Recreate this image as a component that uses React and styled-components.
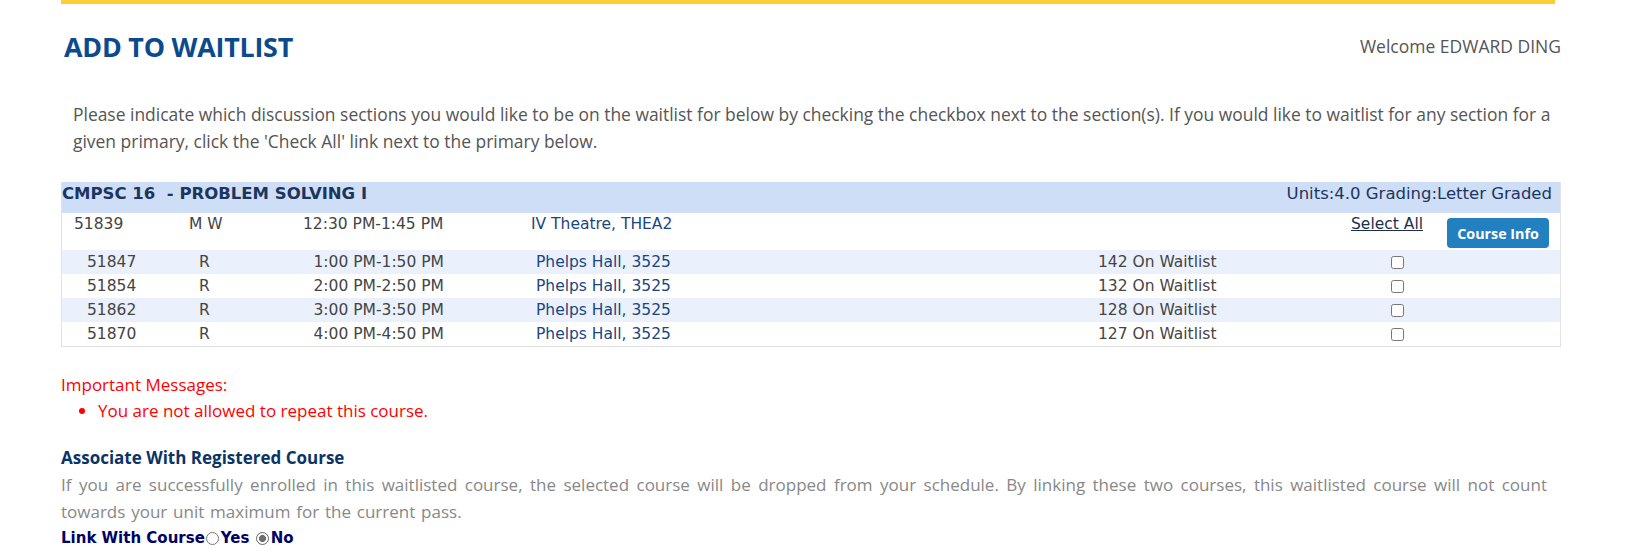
import React from "react";
import styled, { createGlobalStyle } from "styled-components";

const GlobalStyle = createGlobalStyle`
  body {
    margin: 0;
    background: #fff;
    font-family: "Open Sans", "Noto Sans", sans-serif;
  }
`;

const sections = [
  { id: "51847", days: "R", time: "1:00 PM-1:50 PM", room: "Phelps Hall, 3525", wait: 142 },
  { id: "51854", days: "R", time: "2:00 PM-2:50 PM", room: "Phelps Hall, 3525", wait: 132 },
  { id: "51862", days: "R", time: "3:00 PM-3:50 PM", room: "Phelps Hall, 3525", wait: 128 },
  { id: "51870", days: "R", time: "4:00 PM-4:50 PM", room: "Phelps Hall, 3525", wait: 127 },
];

function App() {
  return (
    <Page>
      <GlobalStyle />
      <GoldBar />
      <TitleRow>
        <Title>ADD TO WAITLIST</Title>
        <Welcome>Welcome EDWARD DING</Welcome>
      </TitleRow>

      <Intro>
        Please indicate which discussion sections you would like to be on the waitlist for below by
        checking the checkbox next to the section(s). If you would like to waitlist for any section for a
        given primary, click the 'Check All' link next to the primary below.
      </Intro>

      <CourseTable>
        <CourseHead>
          <CourseName>CMPSC 16&nbsp; - PROBLEM SOLVING I</CourseName>
          <CourseMeta>Units:4.0 Grading:Letter Graded</CourseMeta>
        </CourseHead>
        <PrimaryRow>
          <Cell>51839</Cell>
          <Cell>M W</Cell>
          <Cell>12:30 PM-1:45 PM</Cell>
          <Room>IV Theatre, THEA2</Room>
          <SelectAll href="#">Select All</SelectAll>
          <InfoButton>Course Info</InfoButton>
        </PrimaryRow>
        {sections.map((s, i) => (
          <SectionRow key={s.id} $alt={i % 2 === 0}>
            <Cell>{s.id}</Cell>
            <Cell>{s.days}</Cell>
            <TimeCell>{s.time}</TimeCell>
            <Room>{s.room}</Room>
            <Cell>{s.wait} On Waitlist</Cell>
            <CheckCell>
              <Check type="checkbox" />
            </CheckCell>
          </SectionRow>
        ))}
      </CourseTable>

      <Messages>
        <MessageTitle>Important Messages:</MessageTitle>
        <MessageList>
          <li>You are not allowed to repeat this course.</li>
        </MessageList>
      </Messages>

      <Associate>
        <AssociateTitle>Associate With Registered Course</AssociateTitle>
        <AssociateText>
          If you are successfully enrolled in this waitlisted course, the selected course will be dropped
          from your schedule. By linking these two courses, this waitlisted course will not count towards
          your unit maximum for the current pass.
        </AssociateText>
        <LinkLine>
          Link With Course
          <Radio type="radio" name="link" />
          Yes&nbsp;
          <Radio type="radio" name="link" defaultChecked />
          No
        </LinkLine>
      </Associate>
    </Page>
  );
}

export default App;

const Page = styled.div`
  width: 1500px;
  padding-left: 61px;
`;

const GoldBar = styled.div`
  width: 1494px;
  height: 4px;
  background: #fecd38;
`;

const TitleRow = styled.div`
  display: flex;
  justify-content: space-between;
  align-items: center;
  margin-top: 27px;
  height: 30px;
`;

const Title = styled.h1`
  margin: 0 0 0 3px;
  font-size: 26.8px;
  font-weight: 700;
  color: #0b4a8c;
  letter-spacing: -0.2px;
`;

const Welcome = styled.div`
  font-size: 17.5px;
  color: #555;
`;

const Intro = styled.p`
  margin: 40px 0 0 0;
  padding-left: 12px;
  font-size: 17.45px;
  line-height: 27px;
  color: #555;
`;

const CourseTable = styled.div`
  margin-top: 27px;
  border: 1px solid #e2e2e2;
  border-top: none;
  font-family: "DejaVu Sans", sans-serif;
  font-size: 15.5px;
  color: #444;
`;

const CourseHead = styled.div`
  display: flex;
  justify-content: space-between;
  align-items: flex-start;
  height: 31px;
  padding: 2px 8px 0 0;
  box-sizing: border-box;
  background: #cfdef7;
  color: #1b355f;
  font-size: 16.5px;
`;

const CourseName = styled.div`
  font-weight: 700;
`;

const CourseMeta = styled.div``;

const PrimaryRow = styled.div`
  display: grid;
  grid-template-columns: 115px 114px 228px 1fr auto 102px;
  align-items: start;
  height: 37px;
  padding: 2px 11px 0 12px;
  box-sizing: border-box;
`;

const Cell = styled.div`
  white-space: nowrap;
`;

const TimeCell = styled.div`
  white-space: nowrap;
  text-align: right;
`;

const Room = styled.div`
  color: #1a4680;
  white-space: nowrap;
`;

const SectionRow = styled.div`
  display: grid;
  grid-template-columns: 112px 90px 155px 92px 562px 240px 118px;
  align-items: center;
  height: 24px;
  padding-left: 25px;
  background: ${(p) => (p.$alt ? "#eaf1fd" : "#fff")};

  & > ${Room} {
    grid-column: 5;
  }
`;

const SelectAll = styled.a`
  color: #1c2f4a;
  text-decoration: underline;
  margin-right: 24px;
`;

const InfoButton = styled.button`
  margin-top: 3px;
  height: 30px;
  border: none;
  border-radius: 4px;
  background: #2380c0;
  color: #fff;
  font-family: "Open Sans", sans-serif;
  font-weight: 700;
  font-size: 14.3px;
  padding: 0;
`;

const CheckCell = styled.div`
  display: flex;
  justify-content: center;
`;

const Check = styled.input`
  margin: 0;
  width: 13px;
  height: 13px;
`;

const Messages = styled.div`
  margin-top: 26px;
  color: #ff0000;
  font-size: 17px;
`;

const MessageTitle = styled.div`
  line-height: 24px;
`;

const MessageList = styled.ul`
  margin: 0;
  padding-left: 37px;
  line-height: 28px;
`;

const Associate = styled.div`
  margin-top: 21px;
`;

const AssociateTitle = styled.div`
  font-weight: 700;
  font-size: 17px;
  color: #0b3466;
  line-height: 24px;
`;

const AssociateText = styled.p`
  margin: 1px 0 0;
  padding-right: 14px;
  font-size: 17px;
  line-height: 27px;
  word-spacing: 1.4px;
  color: #888;
  text-align: justify;
`;

const LinkLine = styled.div`
  display: flex;
  align-items: center;
  margin-top: 3px;
  font-family: "DejaVu Sans", sans-serif;
  font-size: 15px;
  font-weight: 700;
  color: #000066;
  line-height: 20px;
`;

const Radio = styled.input`
  appearance: none;
  margin: 0 2px 0 1px;
  width: 13px;
  height: 13px;
  border: 1px solid #777;
  border-radius: 50%;
  box-sizing: border-box;
  background: #fff;
  &:checked {
    border-color: #666;
    background: radial-gradient(circle, #6e6e6e 0 3.2px, #fff 3.8px);
  }
`;
